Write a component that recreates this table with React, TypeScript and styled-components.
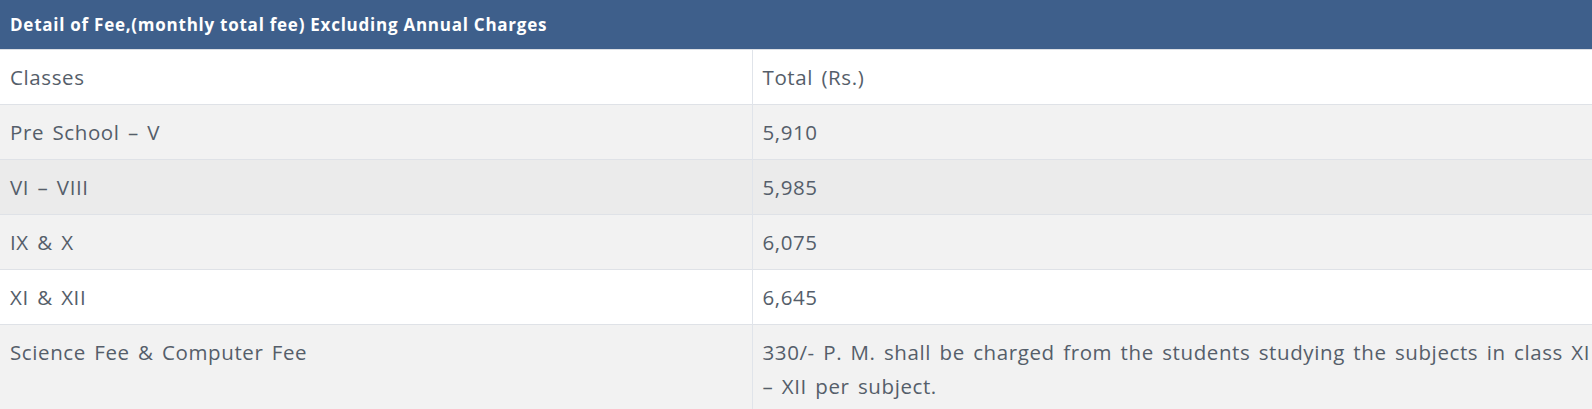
import React from "react";
import styled, { createGlobalStyle } from "styled-components";

const Global = createGlobalStyle`
  html, body { margin: 0; padding: 0; background: #ffffff; }
  body { font-family: "Open Sans", "Noto Sans", sans-serif; overflow: hidden; }
`;

const Wrap = styled.div`
  width: 1592px;
  overflow: hidden;
`;

const Table = styled.table`
  width: 1618px;
  border-collapse: collapse;
  table-layout: fixed;
  color: #555e6a;
  font-size: 20.5px;
  letter-spacing: 0.6px;
  word-spacing: 2.5px;
`;

const HeadCell = styled.th`
  background: #3e5f8b;
  color: #ffffff;
  text-align: left;
  font-weight: 700;
  font-size: 17px;
  letter-spacing: 0.75px;
  word-spacing: 0;
  height: 49px;
  padding: 0 10px;
  border-bottom: 1px solid #dcdfe4;
`;

const Row = styled.tr<{ $bg: string }>`
  background: ${(p) => p.$bg};
`;

const Cell = styled.td<{ $divider?: boolean }>`
  padding: 10px;
  line-height: 34px;
  vertical-align: top;
  border-top: 1px solid #dfe2e7;
  border-left: ${(p) => (p.$divider ? "1px solid #e0e4ea" : "none")};
  box-sizing: border-box;
`;

const rows: { a: string; b: string; bg: string }[] = [
  { a: "Classes", b: "Total (Rs.)", bg: "#ffffff" },
  { a: "Pre School – V", b: "5,910", bg: "#f2f2f2" },
  { a: "VI – VIII", b: "5,985", bg: "#ebebeb" },
  { a: "IX & X", b: "6,075", bg: "#f2f2f2" },
  { a: "XI & XII", b: "6,645", bg: "#ffffff" },
  {
    a: "Science Fee & Computer Fee",
    b: "330/- P. M. shall be charged from the students studying the subjects in class XI –\u00a0XII per subject.",
    bg: "#f2f2f2",
  },
];

export default function App() {
  return (
    <Wrap>
      <Global />
      <Table>
        <colgroup>
          <col style={{ width: 752 }} />
          <col />
        </colgroup>
        <thead>
          <tr>
            <HeadCell colSpan={2}>Detail of Fee,(monthly total fee) Excluding Annual Charges</HeadCell>
          </tr>
        </thead>
        <tbody>
          {rows.map((r) => (
            <Row key={r.a} $bg={r.bg}>
              <Cell>{r.a}</Cell>
              <Cell $divider>{r.b}</Cell>
            </Row>
          ))}
        </tbody>
      </Table>
    </Wrap>
  );
}
